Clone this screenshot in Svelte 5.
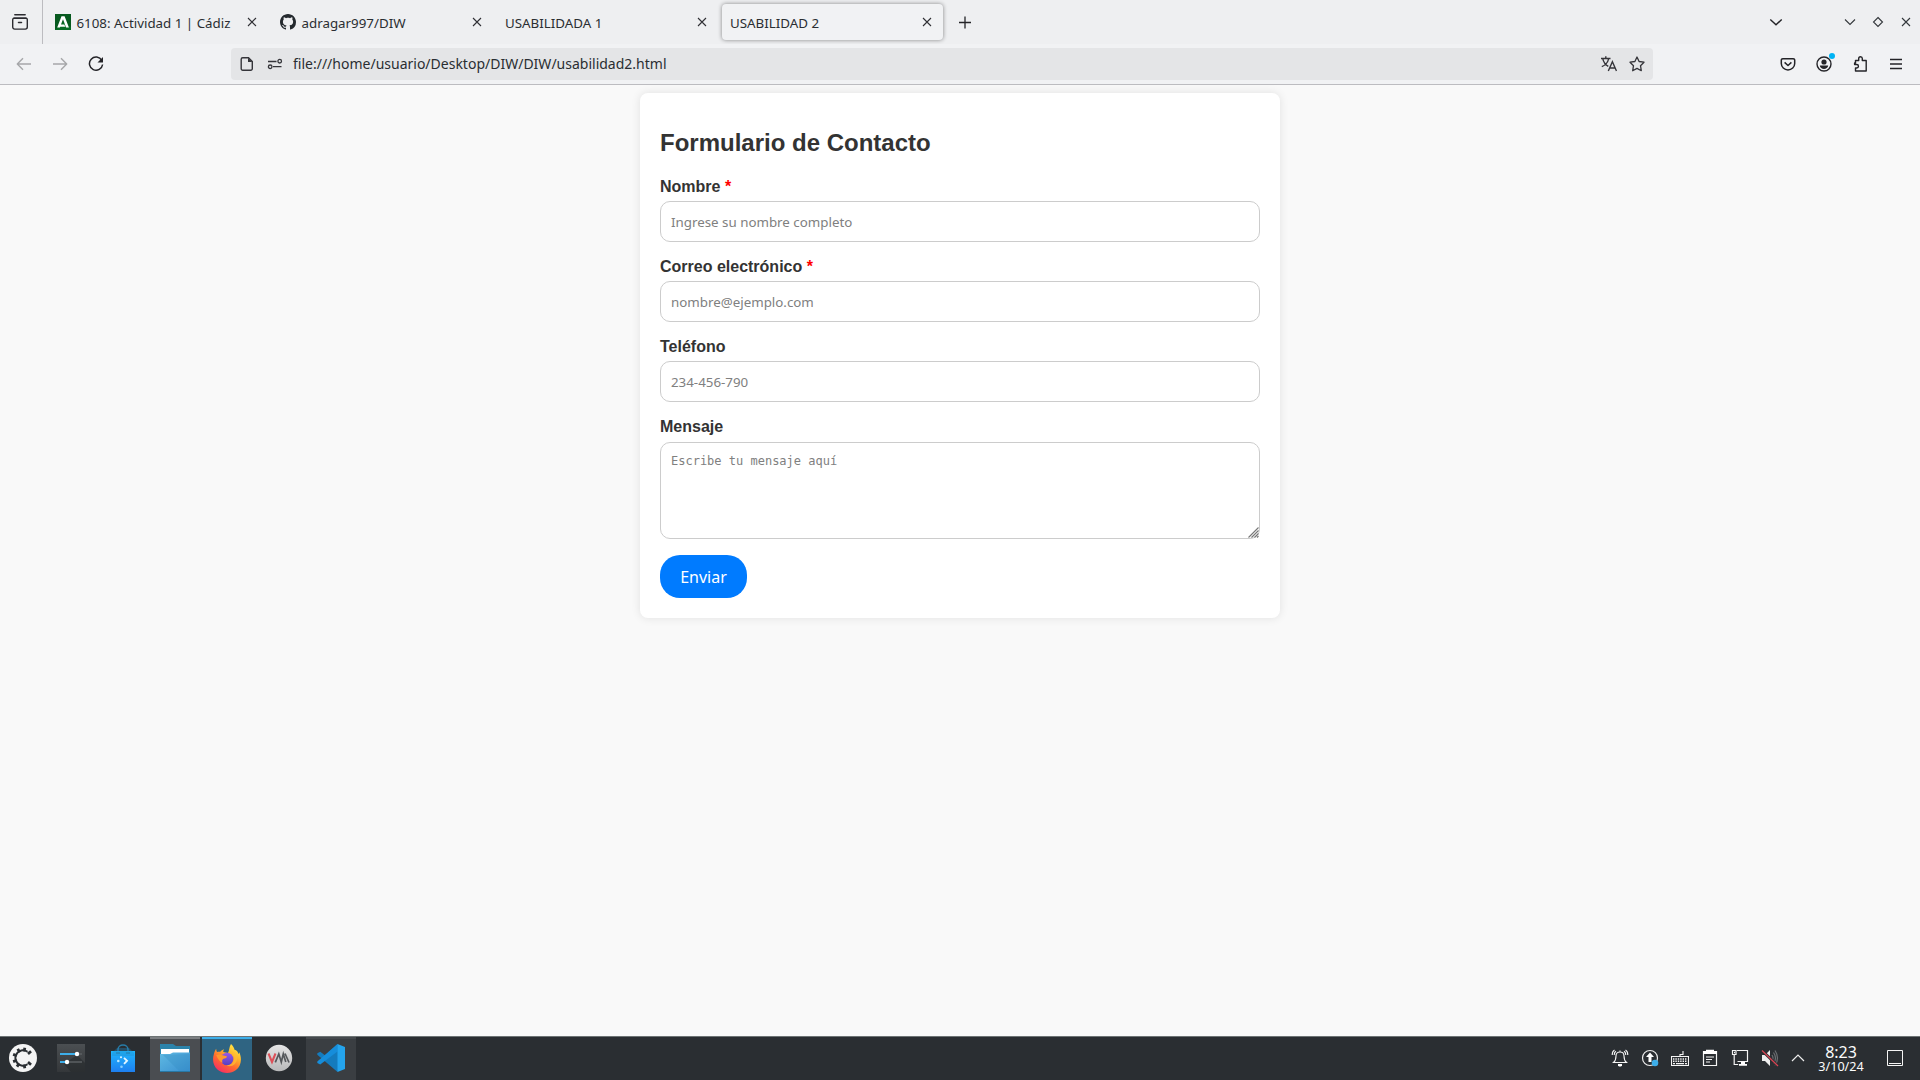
<script>
  const tabs = [
    { title: '6108: Actividad 1 | Cádiz', icon: 'junta' },
    { title: 'adragar997/DIW', icon: 'github' },
    { title: 'USABILIDADA 1' },
    { title: 'USABILIDAD 2', active: true }
  ];

  const fields = [
    { id: 'nombre', label: 'Nombre', required: true, placeholder: 'Ingrese su nombre completo' },
    { id: 'correo', label: 'Correo electrónico', required: true, placeholder: 'nombre@ejemplo.com' },
    { id: 'telefono', label: 'Teléfono', required: false, placeholder: '234-456-790' }
  ];
</script>

<div class="screen">
  <header class="tabbar">
    <div class="recent">
      <svg width="18" height="18" viewBox="0 0 18 18" fill="none" stroke="#2b2b30" stroke-width="1.4" stroke-linecap="round">
        <path d="M3.8 1.7h10.4" /><path d="M2.8 5.200h12.4" stroke-width="1.5" />
        <path d="M1.7 6.8a1.7 1.7 0 0 1 1.7-1.7h11.2a1.7 1.7 0 0 1 1.7 1.7v7.300a2 2 0 0 1-2 2H3.700a2 2 0 0 1-2-2z" />
        <path d="M7.500 9.500h3" stroke-width="1.5" />
      </svg>
    </div>
    <nav class="tabs">
      {#each tabs as tab}
        <div class="tab" class:active={tab.active}>
          {#if tab.icon === 'junta'}
            <svg class="fav" width="16" height="16" viewBox="0 0 16 16">
              <rect width="16" height="16" fill="#07591f" />
              <path d="M0 16h16V13L8 8z" fill="#087a26" opacity=".55" />
              <path d="M2.200 13.400 6.500 2.300h3.100l4.300 11.100h-2.800L8 5.300 6 10.600h3.300l1 2.200H5.200l-.3.600z" fill="#fff" />
            </svg>
          {:else if tab.icon === 'github'}
            <svg class="fav" width="16" height="16" viewBox="0 0 16 16" fill="#24292e">
              <path d="M8 0C3.580 0 0 3.580 0 8c0 3.540 2.290 6.530 5.470 7.590.4.070.550-.170.550-.380 0-.190-.010-.820-.010-1.490-2.010.370-2.530-.490-2.690-.940-.090-.230-.480-.940-.820-1.130-.280-.150-.680-.520-.010-.530.630-.010 1.080.580 1.230.820.720 1.210 1.870.870 2.330.660.070-.520.280-.870.510-1.070-1.780-.200-3.640-.890-3.640-3.950 0-.870.310-1.590.820-2.150-.080-.200-.360-1.020.080-2.120 0 0 .670-.210 2.200.820.640-.180 1.320-.270 2-.270s1.360.090 2 .270c1.530-1.040 2.200-.820 2.200-.820.440 1.100.160 1.920.080 2.120.510.560.820 1.270.820 2.150 0 3.070-1.870 3.750-3.650 3.950.290.250.540.730.540 1.480 0 1.070-.010 1.930-.010 2.200 0 .210.150.460.550.380A8.010 8.010 0 0 0 16 8c0-4.420-3.580-8-8-8z" />
            </svg>
          {/if}
          <span class="title">{tab.title}</span>
          <svg class="close" width="10" height="10" viewBox="0 0 10 10" stroke="#303035" stroke-width="1.100"><path d="M1 1l8 8M9 1l-8 8" /></svg>
        </div>
      {/each}
    </nav>
    <svg class="plus" width="14" height="14" viewBox="0 0 14 14" stroke="#242428" stroke-width="1.300"><path d="M1 7.500h12M7 1.500v12" /></svg>
    <div class="window">
      <svg class="all-tabs" width="14" height="14" viewBox="0 0 14 14" fill="none" stroke="#242428" stroke-width="1.400"><path d="M1.300 4.500 7 9.800l5.700-5.300" /></svg>
      <svg width="12" height="12" viewBox="0 0 12 12" fill="none" stroke="#33373b" stroke-width="1.100"><path d="M1 3.500 6 8.500l5-5" /></svg>
      <svg width="12" height="12" viewBox="0 0 12 12" fill="none" stroke="#33373b" stroke-width="1.100"><path d="M6 1.500 10.500 6 6 10.500 1.500 6z" /></svg>
      <svg width="12" height="12" viewBox="0 0 12 12" fill="none" stroke="#33373b" stroke-width="1.100"><path d="M2 2l8 8M10 2l-8 8" /></svg>
    </div>
  </header>

  <div class="toolbar">
    <div class="nav">
      <svg width="16" height="16" viewBox="0 0 16 16" fill="none" stroke="#a6a7a9" stroke-width="1.400" stroke-linejoin="round"><path d="M15 8H1.500M7 2.200 1.300 8 7 13.800" /></svg>
      <svg width="16" height="16" viewBox="0 0 16 16" fill="none" stroke="#a6a7a9" stroke-width="1.400" stroke-linejoin="round"><path d="M1 8h13.500M9 2.200 14.700 8 9 13.800" /></svg>
      <svg width="16" height="16" viewBox="0 0 16 16" fill="none" stroke="#242428" stroke-width="1.500"><path d="M13.800 4.400A6.600 6.600 0 1 0 14.600 8.500" /><path d="M15 1v5.500H9.500z" fill="#242428" stroke="none" /></svg>
    </div>
    <div class="urlbar">
      <svg class="file" width="14" height="16" viewBox="0 0 14 16" fill="none" stroke="#35353a" stroke-width="1.400"><path d="M2.700 1.700H8.500L12.300 5.500v7.300a1.500 1.500 0 0 1-1.500 1.500H2.700a1.500 1.500 0 0 1-1.500-1.500V3.200a1.500 1.500 0 0 1 1.500-1.500z" /><path d="M8 1.700v4.300h4.300z" fill="#35353a" stroke="none" /></svg>
      <svg class="perms" width="16" height="12" viewBox="0 0 16 12" fill="none" stroke="#35353a" stroke-width="1.300"><path d="M1 3.500h8.500M6 8.700h8.500" /><circle cx="12.700" cy="3.200" r="1.800" /><circle cx="3.200" cy="8.800" r="1.800" /></svg>
      <span class="address">file:///home/usuario/Desktop/DIW/DIW/usabilidad2.html</span>
      <svg class="translate" width="16" height="16" viewBox="0 0 16 16" fill="none" stroke="#35353a" stroke-width="1.400"><path d="M0 2.500h9.500M4.800.3v2.200M7.600 2.800C6.800 6.700 3.500 9.800.8 10.600M1.800 2.800C2.500 6 4.500 8.600 7.300 10.300" /><path d="M7.300 15 11.400 5.800 15.500 15M8.700 12h5.400" /></svg>
      <svg class="star" width="16" height="16" viewBox="0 0 16 16" fill="none" stroke="#35353a" stroke-width="1.300" stroke-linejoin="round"><path d="M8 1l2.100 4.500 4.900.7-3.500 3.500.8 5L8 12.400l-4.300 2.300.8-5L1 6.200l4.900-.7z" /></svg>
    </div>
    <div class="actions">
      <svg width="16" height="16" viewBox="0 0 16 16" fill="none" stroke="#242428" stroke-width="1.500" stroke-linejoin="round"><path d="M2.800 2.700h10.400a1.500 1.500 0 0 1 1.500 1.500V7.500a6.700 6.400 0 0 1-13.400 0V4.200a1.500 1.500 0 0 1 1.500-1.500z" /><path d="M4.600 6.400 8 9.500l3.400-3.100" /></svg>
      <span class="account">
        <svg width="16" height="16" viewBox="0 0 16 16"><circle cx="8" cy="8" r="7" fill="none" stroke="#242428" stroke-width="1.400" /><circle cx="8" cy="6" r="2.600" fill="#242428" /><path d="M3.800 9.500h8.400C12 11.800 10 13 8 13s-4-1.200-4.200-3.500z" fill="#242428" /></svg>
        <i></i>
      </span>
      <svg width="16" height="16" viewBox="0 0 16 16" fill="none" stroke="#242428" stroke-width="1.400" stroke-linejoin="round"><path d="M2.500 7V4.500h3.200V2.600a1.800 1.800 0 0 1 3.600 0v1.900h3.900V15H2.500v-3h1.200a1.700 1.700 0 0 0 0-3.500H1.600V7z" /></svg>
      <svg width="14" height="14" viewBox="0 0 14 14" stroke="#242428" stroke-width="1.300"><path d="M1 2.500h12M1 7h12M1 11.500h12" /></svg>
    </div>
  </div>

  <main>
    <form class="card">
      <h2>Formulario de Contacto</h2>
      {#each fields as field}
        <div class="field">
          <label for={field.id}>{field.label}{#if field.required}{' '}<span class="required">*</span>{/if}</label>
          <input id={field.id} type="text" placeholder={field.placeholder} />
        </div>
      {/each}
      <div class="field">
        <label for="mensaje" class="message-label">Mensaje</label>
        <div class="area">
          <textarea id="mensaje" placeholder="Escribe tu mensaje aquí"></textarea>
          <svg class="grip" width="11" height="11" viewBox="0 0 11 11" stroke="#777" stroke-width="1.100"><path d="M.5 10.500l10-10M3.500 10.500l7-7M6.500 10.500l4-4M9 10.500l1.500-1.500" /></svg>
        </div>
      </div>
      <button type="button">Enviar</button>
    </form>
  </main>

  <footer class="taskbar">
    <div class="apps">
      <div class="app menu">
        <svg width="28" height="28" viewBox="0 0 28 28">
          <circle cx="14" cy="14" r="14" fill="#f4f4f4" />
          <path d="M18.500 7.700A7.700 7.700 0 1 0 18.500 20.300" fill="none" stroke="#2a2e32" stroke-width="2" />
          <g stroke="#2a2e32" stroke-width="2.800">
            {#each [10, 50, 130, 170, 215, 250, 290, 330] as angle}
              <path d="M14 3.500v4" transform="rotate({angle} 14 14)" />
            {/each}
          </g>
        </svg>
      </div>
      <div class="app settings">
        <svg width="28" height="28" viewBox="0 0 28 28">
          <defs><linearGradient id="setg" x2="0" y2="1"><stop stop-color="#4b4f52" /><stop offset="1" stop-color="#34373a" /></linearGradient></defs>
          <rect width="28" height="28" fill="url(#setg)" /><path d="M20 11l8 8v9H14L7 20z" fill="#222528" opacity=".5" />
          <path d="M3 10h22M3 18h22" stroke="#5c6063" stroke-width="1.600" /><path d="M3 10h16M3 18h6" stroke="#3daee9" stroke-width="1.800" />
          <circle cx="20" cy="10" r="2.200" fill="#fff" /><circle cx="10" cy="18" r="2.200" fill="#fff" />
        </svg>
      </div>
      <div class="app">
        <svg width="28" height="28" viewBox="0 0 28 28">
          <defs><linearGradient id="bagg" x2="0" y2="1"><stop stop-color="#20b5fb" /><stop offset="1" stop-color="#1d7ff0" /></linearGradient></defs>
          <path d="M9 9V5.500a5 4.500 0 0 1 10 0V9" fill="none" stroke="#287ca8" stroke-width="1.400" />
          <path d="M2 7h24v21H2z" fill="url(#bagg)" /><path d="M8 4h12l5 5v3H3V9z" fill="#208dcc" opacity=".35" /><path d="M7 9h4M17 9h4" stroke="#2778a5" />
          <path d="m15 13.800 3 3-3 3" fill="none" stroke="#e4f6ff" stroke-width="1.900" /><circle cx="12" cy="13.300" r="1" fill="#e4f6ff" /><circle cx="9.300" cy="17" r="1.300" fill="#b9e7ff" /><circle cx="12.500" cy="22.700" r="1.300" fill="#85cfff" />
        </svg>
      </div>
      <div class="app open">
        <svg width="30" height="28" viewBox="0 0 30 28">
          <defs><linearGradient id="fold" x2="1" y2="1"><stop stop-color="#5fb9e2" /><stop offset="1" stop-color="#398fd0" /></linearGradient></defs>
          <path d="M0 0h13l3 2h14v12H0z" fill="#2c83aa" /><path d="M1 5h28v7H1z" fill="#fff" />
          <path d="M0 10h10l3-1.500h17V28H0z" fill="url(#fold)" /><path d="M3 11l17 17h10V10z" fill="#328ac0" opacity=".3" /><path d="M0 27.500h30" stroke="#2878a5" />
        </svg>
      </div>
      <div class="app current">
        <svg width="28" height="29" viewBox="0 0 28 29">
          <defs>
            <linearGradient id="fire" x1=".85" y1="0" x2=".25" y2="1"><stop stop-color="#fff14b" /><stop offset=".35" stop-color="#ffb52b" /><stop offset=".65" stop-color="#ff692f" /><stop offset="1" stop-color="#f52a67" /></linearGradient>
            <linearGradient id="globe" x2="0" y2="1"><stop stop-color="#9959e8" /><stop offset="1" stop-color="#5640c0" /></linearGradient>
          </defs>
          <path d="M18 0c2.300 2.200 3 3.700 3.500 5.800 2-.1 3.700 2.500 4 4.300.7-.5.700-1.500.6-2.100C29.500 14.700 28 22 23 26c-5 4-13 3.800-18 0C0 22 -.8 15.500.8 10.500 1.200 8.500 2 6.200 3.200 4.800c.1 1.700.4 2.600 1 3.200 1-.4 2.100-.4 3-.2 1-1.300 2.300-2.200 3.900-2.600-.8 1.100-1 2-.8 2.900L15 9c1.600-2.800 1-6 3-9z" fill="url(#fire)" />
          <circle cx="14" cy="15" r="6.300" fill="url(#globe)" />
          <path d="M3.200 11.200c3-1.700 5.700-.2 7.200.3 2 .2 3.400.5 3.600 1.300-.3 1.300-2.500 1.700-3.500 2-1.600.8-1.600 2.600-.8 4-3-1-5-4-6.500-7.600z" fill="#ff982e" />
          <path d="M17 7c4 1.800 5 6 3.800 9.300C19.800 20 16 21.800 13 21c5 3.500 10.500-1 11-5.500C24.500 11 22 7 17 7z" fill="#ffbd33" opacity=".7" />
        </svg>
      </div>
      <div class="app">
        <svg width="28" height="28" viewBox="0 0 28 28">
          <defs><linearGradient id="vmg" x2="0" y2="1"><stop stop-color="#e5e5e5" /><stop offset="1" stop-color="#b8b9ba" /></linearGradient></defs>
          <circle cx="14" cy="14" r="13.200" fill="url(#vmg)" />
          <path d="M3.500 9.500 7 18l3.500-8.500" fill="none" stroke="#dc5058" stroke-width="2" /><path d="M10.300 18.300 13.800 10l2.500 8 2-8 2.500 8M20 9.500l4 9" fill="none" stroke="#55585b" stroke-width="1.700" />
        </svg>
      </div>
      <div class="app vscode">
        <svg width="28" height="28" viewBox="0 0 28 28">
          <path d="M20.500 0 8.200 11.600 3.300 7.800.300 9.200v1.500L20.500 28l1.500-5V6z" fill="#147bbd" />
          <path d="M.3 17.500 20.500 0v7.500L3.200 20.500.3 18.900z" fill="#168dda" />
          <path d="M20.500 0 28 3v22l-7.500 3z" fill="#24a4ed" />
        </svg>
      </div>
    </div>

    <div class="tray">
      <svg width="18" height="18" viewBox="0 0 18 18" fill="none" stroke="#f5f5f5" stroke-width="1.100"><path d="M2.500 13.500h13c-1.800-1.500-2.500-3-2.500-6.500C13 4.300 11.500 3 9 3S5 4.300 5 7c0 3.500-.7 5-2.500 6.500zM9 3V1.500M3.500 1C1.700 2 1.200 3.500 1.200 6M5 2.300C3.600 3 3.200 4.200 3.200 6M14.500 1c1.800 1 2.300 2.500 2.300 5M13 2.300c1.400.7 1.800 1.900 1.800 3.700" /><path d="M7 15h4v1.500L10 17.500H8L7 16.500z" fill="#fff" stroke="none" /></svg>
      <svg width="18" height="18" viewBox="0 0 18 18"><circle cx="9" cy="9" r="7.500" fill="none" stroke="#eee" stroke-width="1.200" /><path d="M9 3.500 13 8h-2.500v5h-3V8H5z" fill="#fff" /><circle cx="14" cy="14" r="3.300" fill="#3daee9" /></svg>
      <svg width="18" height="18" viewBox="0 0 18 18" fill="none" stroke="#f5f5f5" stroke-width="1.100"><path d="M.5 7.500h17v9H.5zM9 7.500V5.500h3V2" /><path d="M2 10h14M2 12.200h14" stroke-width="1.400" stroke-dasharray="1.400 1" /><path d="M2 14.600h2M5 14.600h8M14 14.600h2" /></svg>
      <svg width="18" height="18" viewBox="0 0 18 18" fill="none" stroke="#f5f5f5" stroke-width="1.200"><path d="M2.500 2.500h13v14h-13z" /><path d="M2 2h3V.8h8V2h3v3H2z" fill="#fff" stroke="none" /><path d="M5 8h8M5 10.500h6M5 13h4" /></svg>
      <svg width="18" height="18" viewBox="0 0 18 18" fill="none" stroke="#f5f5f5" stroke-width="1.200"><path d="M6 1.500h10.500v11H6.500M1.500 1.500h3.500v4H1.500zM3.200 5.500v10h4" /><path d="M3 3.500h1" stroke-width="1.500" /><path d="M10 13h4v2h2v1.800H8V15h2z" fill="#fff" stroke="none" /></svg>
      <svg width="18" height="18" viewBox="0 0 18 18" fill="none"><path d="M1 6h3l5-5v16l-5-5H1z" fill="#eee" /><path d="M11 6q2 3 0 6M12.500 3.500q4 5.500 0 11M14 1.500q5 7.500 0 15" stroke="#6d7073" stroke-width="1.200" /><path d="M1 1.500 17 17" stroke="#2a2e32" stroke-width="3" /><path d="M1 1.500 17 17" stroke="#da4453" stroke-width="1.200" /></svg>
      <svg class="up" width="14" height="14" viewBox="0 0 14 14" fill="none" stroke="#eee" stroke-width="1.200"><path d="m1 10 6-6 6 6" /></svg>
      <div class="clock"><span class="time">8:23</span><span class="date">3/10/24</span></div>
      <svg class="desktop" width="16" height="16" viewBox="0 0 16 16" fill="none" stroke="#f5f5f5"><path d="M.5.500h15v15H.5zM2 13.500h12" /></svg>
    </div>
  </footer>
</div>

<style>
  :global(body) { margin: 0; overflow: hidden; }
  * { box-sizing: border-box; }
  svg { display: block; flex: none; }
  .screen { display: flex; flex-direction: column; width: 1920px; height: 1080px; background: #f9f9f9; font-family: 'Noto Sans', sans-serif; color: #2a2e32; }

  .tabbar { display: flex; align-items: center; flex: none; height: 44px; background: #eeeff1; }
  .recent { display: flex; align-items: center; justify-content: flex-end; width: 43px; height: 44px; padding-right: 13px; border-right: 1px solid #bcbcc0; }
  .tabs { display: flex; padding-left: 2px; }
  .tab { display: flex; align-items: center; width: 221px; height: 36px; margin: 0 2px; padding: 0 11px 0 8px; border-radius: 4px; font-size: 13.330px; }
  .tab.active { background: #f1f2f4; box-shadow: 0 0 4px rgba(0, 0, 0, .45); }
  .fav { margin-right: 5.500px; }
  .title { flex: 1; padding-top: 2px; line-height: 18px; white-space: nowrap; }
  .plus { margin-left: 12.500px; }
  .window { display: flex; align-items: center; gap: 16px; margin-left: auto; padding-right: 8px; }
  .all-tabs { margin-right: 45px; }

  .toolbar { display: flex; align-items: center; flex: none; height: 41px; background: #f1f2f4; border-bottom: 1px solid #bcbcc0; }
  .nav { display: flex; gap: 20px; width: 231px; padding-left: 16px; }
  .urlbar { display: flex; align-items: center; width: 1422px; height: 32px; padding: 0 8px 0 9px; border-radius: 4px; background: #e4e5e7; }
  .perms { margin-left: 13px; }
  .address { flex: 1; margin-left: 10px; font-size: 14px; line-height: 20px; }
  .star { margin-left: 12px; }
  .actions { display: flex; align-items: center; gap: 20.500px; margin-left: auto; padding-right: 17px; }
  .account { position: relative; }
  .account i { position: absolute; top: -3px; right: -3px; width: 6px; height: 6px; border-radius: 50%; background: #00b3f4; }

  main { flex: 1; padding-top: 8px; background: #f9f9f9; }
  .card { width: 640px; height: 525px; margin: 0 auto; padding: 20px; border-radius: 8px; background: #fff; box-shadow: 0 0 10px rgba(0, 0, 0, .1); font-family: 'Liberation Sans', Arial, sans-serif; color: #333; }
  h2 { margin: 16px 0 22px; font-size: 24px; line-height: 27px; }
  .field { margin-bottom: 16px; }
  label { display: block; height: 18px; margin-bottom: 5px; font-size: 16px; font-weight: bold; line-height: 18px; }
  .message-label { margin-bottom: 6px; }
  .required { color: #f00; }
  input, textarea { display: block; width: 100%; padding: 10px; border: 1px solid #ccc; border-radius: 10px; background: #fff; outline: none; }
  input { height: 41px; font: 13.330px 'Noto Sans', sans-serif; }
  textarea { height: 97px; resize: none; font: 12px/16px 'DejaVu Sans Mono', monospace; }
  input::placeholder, textarea::placeholder { color: #808080; opacity: 1; }
  .area { position: relative; }
  .grip { position: absolute; right: 1px; bottom: 1px; }
  button { display: block; width: 87px; height: 43px; padding: 0; border: 0; border-radius: 20px; background: #007bff; color: #fff; font: 16px/22px 'Noto Sans', sans-serif; }

  .taskbar { display: flex; justify-content: space-between; flex: none; height: 44px; background: #2a2e32; border-top: 1px solid #6d7374; }
  .apps { display: flex; }
  .app { display: flex; align-items: center; justify-content: center; width: 50px; height: 43px; margin: 0 1px; padding-bottom: 3px; border-top: 2px solid transparent; }
  .menu { width: 46px; margin: 0; }
  .settings { margin-left: 0; padding-right: 1px; }
  .open { background: #4a4d51; border-color: #7b7e81; }
  .current { background: #2f6482; border-color: #3daee9; }
  .vscode { background: #3a3e42; border-color: #45494d; }
  .tray { display: flex; align-items: center; gap: 12px; padding-bottom: 2px; color: #fcfcfc; }
  .clock { display: flex; flex-direction: column; align-items: center; width: 52px; margin-left: -2px; padding-top: 4px; }
  .time { font-size: 16px; line-height: 15px; }
  .date { font-size: 12.600px; line-height: 14px; }
  .desktop { margin: 0 17px 0 8px; }
</style>
